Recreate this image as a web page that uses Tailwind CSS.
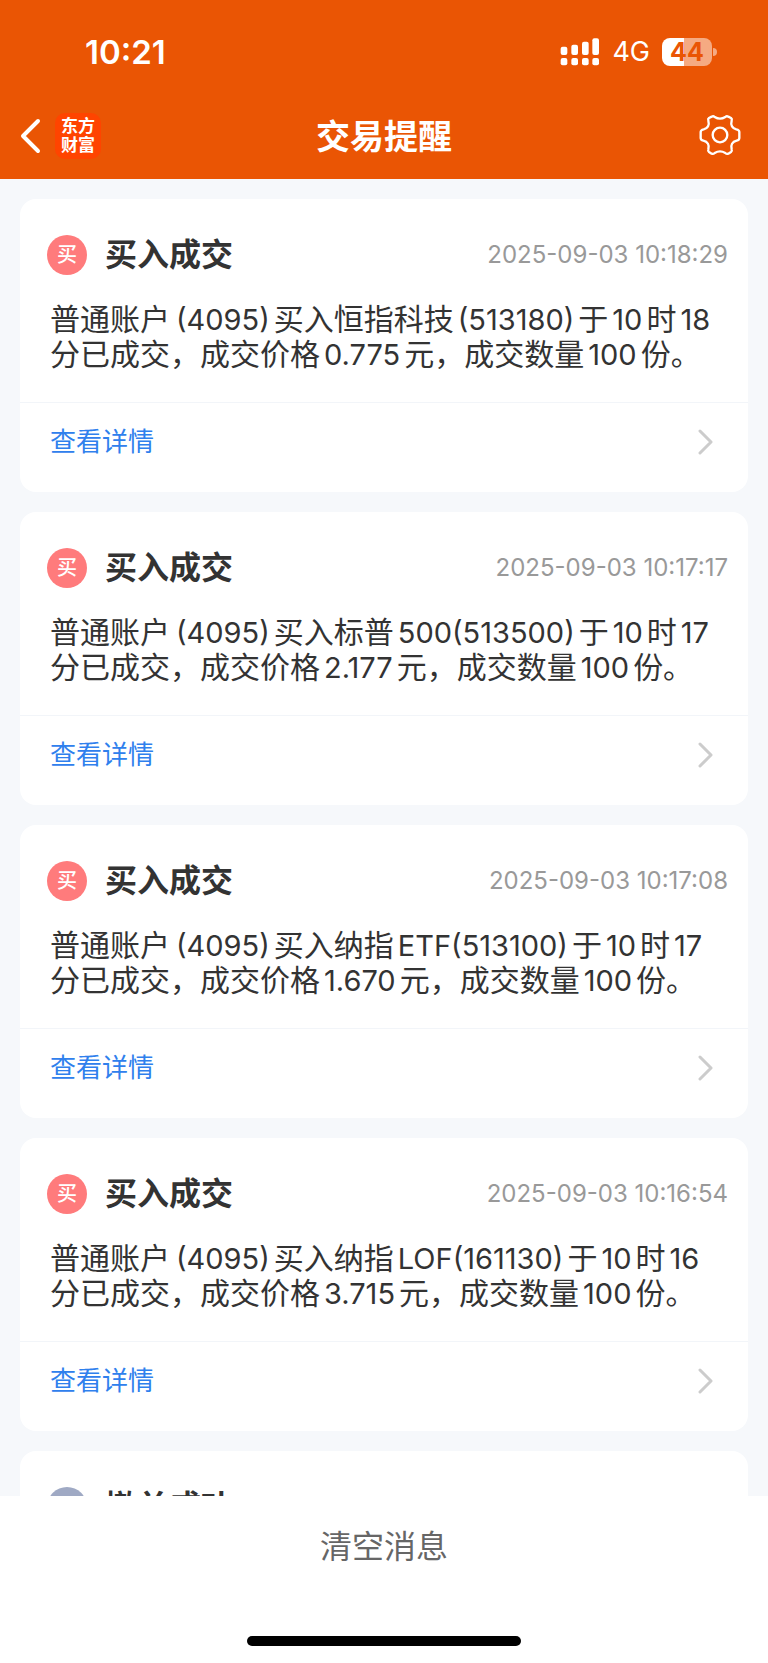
<!DOCTYPE html>
<html lang="zh-CN">
<head>
<meta charset="utf-8">
<meta name="viewport" content="width=device-width, initial-scale=1">
<title>交易提醒</title>
<script src="https://cdn.jsdelivr.net/npm/@tailwindcss/browser@4"></script>
</head>
<body class="flex h-screen flex-col overflow-hidden bg-[#f6f8fb] font-['Inter','Noto_Sans_CJK_SC',sans-serif] text-[#333333]">

<header class="shrink-0 bg-[#ea5504] text-white">
  <div class="flex h-[102px] items-center justify-between pt-[2px] pr-[51px] pl-[85px]">
    <time class="text-[33px] leading-10 font-semibold">10:21</time>
    <div class="flex items-center gap-3">
      <svg class="h-7 w-10" viewBox="63 52 120 84" fill="currentColor" aria-hidden="true">
        <rect x="65" y="78" width="20" height="25" rx="6"/><rect x="97" y="72" width="20" height="31" rx="6"/><rect x="129" y="63" width="20" height="40" rx="6"/><rect x="160" y="53" width="20" height="50" rx="6"/>
        <rect x="65" y="112" width="20" height="22" rx="6"/><rect x="97" y="112" width="20" height="22" rx="6"/><rect x="129" y="112" width="20" height="22" rx="6"/><rect x="160" y="112" width="20" height="22" rx="6"/>
      </svg>
      <span class="text-[27px] leading-8">4G</span>
      <div class="flex items-center gap-px">
        <div class="flex h-7 w-[50px] items-center justify-center rounded-lg bg-linear-to-r from-white from-44% to-[#f5aa82] to-44% text-[25px] leading-7 font-bold text-[#ea5504]">44</div>
        <div class="h-2 w-1 rounded-r-full bg-[#f5aa82]"></div>
      </div>
    </div>
  </div>
  <div class="grid h-[77px] grid-cols-3 items-start pr-[26px] pl-[18px]">
    <div class="flex items-center gap-3 pt-[11px]">
      <button type="button" aria-label="返回" class="flex h-[46px] w-[25px] items-center">
        <svg class="h-9 w-6" viewBox="0 0 24 36" fill="none" stroke="currentColor" stroke-width="4" stroke-linecap="round" stroke-linejoin="round"><path d="M20 3 5 18l15 15"/></svg>
      </button>
      <div class="flex size-[46px] flex-col items-center justify-center rounded-[10px] bg-[#ff4400] text-[17px] leading-[19px] font-bold"><span>东方</span><span>财富</span></div>
    </div>
    <h1 class="pt-[11px] pl-2 text-center text-[34px] leading-[48px] font-bold">交易提醒</h1>
    <button type="button" aria-label="设置" class="mt-[11px] size-11 justify-self-end">
      <svg class="size-11" viewBox="55 38 132 132" fill="none" stroke="currentColor" stroke-width="7" stroke-linejoin="round">
        <path d="M105 50Q121 60 137 50Q141 46 146 49L154 53Q158 56 156 61C152 75 158 84 170 87Q179 89 179 95V113Q179 119 171 121C158 124 152 134 156 147Q158 152 154 155L146 160Q141 162 137 158Q121 148 105 158Q101 162 96 160L88 155Q84 152 86 147C90 134 84 124 71 121Q63 119 63 113V95Q63 89 72 87C84 84 90 75 86 61Q84 56 88 53L96 49Q101 46 105 50Z"/>
        <circle cx="121" cy="104" r="22"/>
      </svg>
    </button>
  </div>
</header>

<main class="flex min-h-0 flex-1 flex-col gap-5 overflow-hidden px-5 pt-5">

  <article class="shrink-0 rounded-2xl bg-white">
    <div class="flex h-[76px] items-end justify-between pr-5 pl-[27px]">
      <div class="flex items-center gap-[18px]">
        <span class="flex size-10 items-center justify-center rounded-full bg-[#ff7b7c] text-xl font-medium text-white">买</span>
        <h2 class="text-[32px] leading-10 font-bold">买入成交</h2>
      </div>
      <time class="text-[24px] leading-10 text-[#999999]">2025-09-03 10:18:29</time>
    </div>
    <p class="pt-[27px] pr-5 pb-[30px] pl-[30px] text-[30px] leading-[35px]">普通账户<span class="pr-1 pl-[6px] text-[29px]">(4095)</span>买入恒指科技<span class="px-1 text-[29px]">(513180)</span>于<span class="px-1 text-[29px]">10</span>时<span class="px-1 text-[29px]">18</span>分已成交，成交价格<span class="px-1 text-[29px]">0.775</span>元，成交数量<span class="px-1 text-[29px]">100</span>份。</p>
    <a href="#" class="flex items-center justify-between border-t border-[#f2f5f9] pt-[21px] pr-[34px] pb-8 pl-[30px] text-[26px] leading-9 text-[#2f80ed]">查看详情
      <svg class="h-7 w-4" viewBox="0 0 16 28" fill="none" stroke="#cccccc" stroke-width="3" stroke-linecap="round" stroke-linejoin="round" aria-hidden="true"><path d="M2 3 13 14 2 25"/></svg></a>
  </article>

  <article class="shrink-0 rounded-2xl bg-white">
    <div class="flex h-[76px] items-end justify-between pr-5 pl-[27px]">
      <div class="flex items-center gap-[18px]">
        <span class="flex size-10 items-center justify-center rounded-full bg-[#ff7b7c] text-xl font-medium text-white">买</span>
        <h2 class="text-[32px] leading-10 font-bold">买入成交</h2>
      </div>
      <time class="text-[24px] leading-10 text-[#999999]">2025-09-03 10:17:17</time>
    </div>
    <p class="pt-[27px] pr-5 pb-[30px] pl-[30px] text-[30px] leading-[35px]">普通账户<span class="pr-1 pl-[6px] text-[29px]">(4095)</span>买入标普<span class="px-1 text-[29px]">500(513500)</span>于<span class="px-1 text-[29px]">10</span>时<span class="px-1 text-[29px]">17</span>分已成交，成交价格<span class="px-1 text-[29px]">2.177</span>元，成交数量<span class="px-1 text-[29px]">100</span>份。</p>
    <a href="#" class="flex items-center justify-between border-t border-[#f2f5f9] pt-[21px] pr-[34px] pb-8 pl-[30px] text-[26px] leading-9 text-[#2f80ed]">查看详情
      <svg class="h-7 w-4" viewBox="0 0 16 28" fill="none" stroke="#cccccc" stroke-width="3" stroke-linecap="round" stroke-linejoin="round" aria-hidden="true"><path d="M2 3 13 14 2 25"/></svg></a>
  </article>

  <article class="shrink-0 rounded-2xl bg-white">
    <div class="flex h-[76px] items-end justify-between pr-5 pl-[27px]">
      <div class="flex items-center gap-[18px]">
        <span class="flex size-10 items-center justify-center rounded-full bg-[#ff7b7c] text-xl font-medium text-white">买</span>
        <h2 class="text-[32px] leading-10 font-bold">买入成交</h2>
      </div>
      <time class="text-[24px] leading-10 text-[#999999]">2025-09-03 10:17:08</time>
    </div>
    <p class="pt-[27px] pr-5 pb-[30px] pl-[30px] text-[30px] leading-[35px]">普通账户<span class="pr-1 pl-[6px] text-[29px]">(4095)</span>买入纳指<span class="px-1 text-[29px]">ETF(513100)</span>于<span class="px-1 text-[29px]">10</span>时<span class="px-1 text-[29px]">17</span>分已成交，成交价格<span class="px-1 text-[29px]">1.670</span>元，成交数量<span class="px-1 text-[29px]">100</span>份。</p>
    <a href="#" class="flex items-center justify-between border-t border-[#f2f5f9] pt-[21px] pr-[34px] pb-8 pl-[30px] text-[26px] leading-9 text-[#2f80ed]">查看详情
      <svg class="h-7 w-4" viewBox="0 0 16 28" fill="none" stroke="#cccccc" stroke-width="3" stroke-linecap="round" stroke-linejoin="round" aria-hidden="true"><path d="M2 3 13 14 2 25"/></svg></a>
  </article>

  <article class="shrink-0 rounded-2xl bg-white">
    <div class="flex h-[76px] items-end justify-between pr-5 pl-[27px]">
      <div class="flex items-center gap-[18px]">
        <span class="flex size-10 items-center justify-center rounded-full bg-[#ff7b7c] text-xl font-medium text-white">买</span>
        <h2 class="text-[32px] leading-10 font-bold">买入成交</h2>
      </div>
      <time class="text-[24px] leading-10 text-[#999999]">2025-09-03 10:16:54</time>
    </div>
    <p class="pt-[27px] pr-5 pb-[30px] pl-[30px] text-[30px] leading-[35px]">普通账户<span class="pr-1 pl-[6px] text-[29px]">(4095)</span>买入纳指<span class="px-1 text-[29px]">LOF(161130)</span>于<span class="px-1 text-[29px]">10</span>时<span class="px-1 text-[29px]">16</span>分已成交，成交价格<span class="px-1 text-[29px]">3.715</span>元，成交数量<span class="px-1 text-[29px]">100</span>份。</p>
    <a href="#" class="flex items-center justify-between border-t border-[#f2f5f9] pt-[21px] pr-[34px] pb-8 pl-[30px] text-[26px] leading-9 text-[#2f80ed]">查看详情
      <svg class="h-7 w-4" viewBox="0 0 16 28" fill="none" stroke="#cccccc" stroke-width="3" stroke-linecap="round" stroke-linejoin="round" aria-hidden="true"><path d="M2 3 13 14 2 25"/></svg></a>
  </article>

  <article class="shrink-0 rounded-t-2xl bg-white">
    <div class="flex h-[76px] items-end pr-5 pl-[27px]">
      <div class="flex items-center gap-[18px]">
        <span class="flex size-10 items-center justify-center rounded-full bg-[#9fa9c4] text-xl font-medium text-white">撤</span>
        <h2 class="text-[32px] leading-10 font-bold">撤单成功</h2>
      </div>
    </div>
  </article>
</main>

<footer class="flex shrink-0 flex-col items-center bg-white pb-[17px]">
  <button type="button" class="h-[100px] w-full pt-[2px] text-[32px] text-[#666666]">清空消息</button>
  <div class="mt-10 h-[10px] w-[274px] rounded-full bg-black"></div>
</footer>
</body>
</html>
